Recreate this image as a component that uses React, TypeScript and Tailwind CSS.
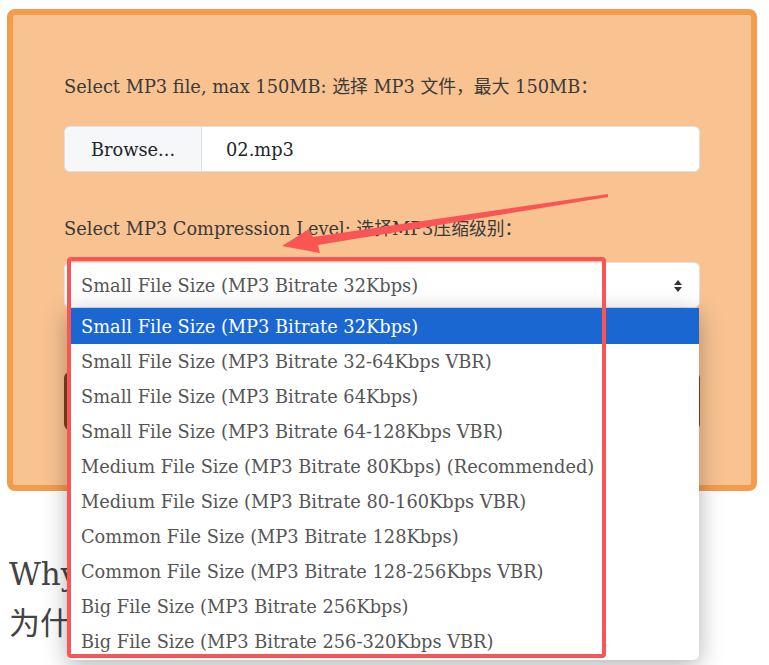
const options = [
  'Small File Size (MP3 Bitrate 32Kbps)',
  'Small File Size (MP3 Bitrate 32-64Kbps VBR)',
  'Small File Size (MP3 Bitrate 64Kbps)',
  'Small File Size (MP3 Bitrate 64-128Kbps VBR)',
  'Medium File Size (MP3 Bitrate 80Kbps) (Recommended)',
  'Medium File Size (MP3 Bitrate 80-160Kbps VBR)',
  'Common File Size (MP3 Bitrate 128Kbps)',
  'Common File Size (MP3 Bitrate 128-256Kbps VBR)',
  'Big File Size (MP3 Bitrate 256Kbps)',
  'Big File Size (MP3 Bitrate 256-320Kbps VBR)',
];

const font = { fontFamily: '"DejaVu Serif", "Noto Sans CJK SC", serif' };

const App = () => {
  return (
    <div className="relative w-[769px] h-[665px] overflow-hidden bg-white text-[#3d3d3d]" style={font}>
      <div className="pt-[9px] pl-[7px]">
        <div className="w-[750px] h-[482px] rounded-[8px] border-[6px] border-[#f49c4e] bg-[#f8c391] px-[51px] pt-[58px]">
          <label className="block text-[17.8px] leading-[27px] text-[#3a3a3a]">
            Select MP3 file, max 150MB: 选择 MP3 文件，最大 150MB：
          </label>

          <div className="mt-[26px] flex h-[46px] w-[636px] overflow-hidden rounded-[6px] border border-[#dee2e6] bg-white">
            <div className="flex w-[137px] items-center justify-center border-r border-[#dee2e6] bg-[#f6f7f9] pt-[3px] text-[17.8px] text-[#212529]">
              Browse...
            </div>
            <div className="flex items-center pl-[24px] pt-[3px] text-[17.8px] text-[#212529]">02.mp3</div>
          </div>

          <label className="mt-[43px] block text-[17.8px] leading-[27px] text-[#3a3a3a]">
            Select MP3 Compression Level: 选择MP3压缩级别：
          </label>

          <div className="mt-[20px] flex h-[46px] w-[636px] items-center justify-between rounded-[6px] border border-[#dee2e6] bg-white pl-[16px] pr-[16px] pt-[2px] text-[17.8px] text-[#555]">
            <span>Small File Size (MP3 Bitrate 32Kbps)</span>
            <svg width="10" height="14" viewBox="0 0 10 14">
              <path d="M5 1 L9 6 H1 Z" fill="#333" />
              <path d="M5 13 L9 8 H1 Z" fill="#333" />
            </svg>
          </div>

          <button className="mt-[64px] h-[58px] w-[636px] rounded-[6px] bg-[#7a4523]" />
        </div>
      </div>

      <div className="px-[9px] pt-[60px] text-[#444]">
        <h2 className="text-[31px] leading-[46px]">Why Compress MP3 Files?</h2>
        <p className="mt-[3px] text-[31px] leading-[46px]">为什么要压缩 MP3 文件？</p>
      </div>

      {/* open select list */}
      <ul className="absolute left-[67px] top-[308px] w-[632px] overflow-hidden rounded-b-[6px] bg-white shadow-[0_6px_24px_rgba(0,0,0,0.3)]">
        {options.map((opt, i) => (
          <li
            key={i}
            className={`flex items-center pl-[14px] pt-[2px] text-[17.8px] ${
              i === 0 ? 'h-[36px] bg-[#1a67d2] text-white' : 'h-[35px] text-[#555]'
            }`}
          >
            {opt}
          </li>
        ))}
        <li className="h-[1px]" />
      </ul>

      {/* annotation */}
      <div className="pointer-events-none absolute left-[67px] top-[257px] h-[401px] w-[539px] rounded-[4px] border-[4px] border-[#fa5555]" />
      <svg className="pointer-events-none absolute left-0 top-0" width="769" height="665">
        <polygon
          points="608,194 608,197 318,245 320,253 282,246 309,229 313,237"
          fill="#fa5555"
        />
      </svg>
    </div>
  );
};

export default App;
